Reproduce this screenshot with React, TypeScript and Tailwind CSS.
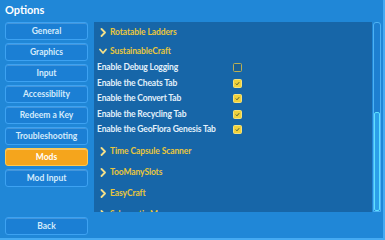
import React from "react";

const font = { fontFamily: "Lato, 'Open Sans', sans-serif" };

function NavButton({ label, active }: { label: string; active?: boolean }) {
  return (
    <div
      className={
        active
          ? "h-[18px] rounded-[3px] border border-[#ffc94d] bg-[#f5a51c] flex items-center justify-center text-[8.5px] font-bold text-white shadow-[inset_0_1px_0_rgba(255,255,255,0.35)]"
          : "h-[18px] rounded-[3px] border border-[#3da2f2] bg-[#1b7fd4] flex items-center justify-center text-[8.5px] font-bold text-[#d4ebfb] shadow-[inset_0_1px_0_rgba(255,255,255,0.18)]"
      }
    >
      {label}
    </div>
  );
}

function Chevron({ down }: { down?: boolean }) {
  return (
    <svg width="8" height="9" viewBox="0 0 8 9" className="shrink-0">
      {down ? (
        <path d="M1 2.5 L4 6 L7 2.5" fill="none" stroke="#f3e08a" strokeWidth="1.8" strokeLinecap="round" strokeLinejoin="round" />
      ) : (
        <path d="M2.5 1 L6 4.5 L2.5 8" fill="none" stroke="#f3e08a" strokeWidth="1.8" strokeLinecap="round" strokeLinejoin="round" />
      )}
    </svg>
  );
}

function Header({ label, down, h }: { label: string; down?: boolean; h: string }) {
  return (
    <div className={`${h} flex items-center pl-[5px] gap-[3px] shrink-0`}>
      <Chevron down={down} />
      <span className="text-[8.5px] font-bold text-[#e9c63c] tracking-[-0.1px]">{label}</span>
    </div>
  );
}

function Setting({ label, checked }: { label: string; checked?: boolean }) {
  return (
    <div className="h-[15.5px] flex items-center pl-[3px] shrink-0">
      <span className="w-[136px] text-[8.5px] font-bold text-[#e3f1fb] tracking-[-0.15px] whitespace-nowrap">{label}</span>
      <div
        className={
          checked
            ? "w-[9px] h-[9px] rounded-[1.5px] bg-[#f1d23b] border border-[#f7e27a] flex items-center justify-center"
            : "w-[9px] h-[9px] rounded-[1.5px] bg-[#1a5f95] border border-[#b9b056]"
        }
      >
        {checked && (
          <svg width="5" height="5" viewBox="0 0 5 5">
            <path d="M0.8 2.6 L2 3.8 L4.2 1.2" fill="none" stroke="#4a5a3a" strokeWidth="1" />
          </svg>
        )}
      </div>
    </div>
  );
}

export default function App() {
  return (
    <div
      className="w-[385px] h-[240px] bg-[#2087d7] flex flex-col overflow-hidden border-r-[2px] border-b-[2px] border-[#45aaf2]"
      style={font}
    >
      <div className="h-[22px] shrink-0 flex items-center pl-[5px] pb-[1px]">
        <span className="text-[11px] font-bold text-white">Options</span>
      </div>
      <div className="flex flex-1">
        <div className="w-[83px] ml-[5px] flex flex-col gap-[3px] pb-[3px]">
          <NavButton label="General" />
          <NavButton label="Graphics" />
          <NavButton label="Input" />
          <NavButton label="Accessibility" />
          <NavButton label="Redeem a Key" />
          <NavButton label="Troubleshooting" />
          <NavButton label="Mods" active />
          <NavButton label="Mod Input" />
          <div className="mt-auto">
            <NavButton label="Back" />
          </div>
        </div>
        <div className="ml-[6px] self-start flex">
          <div className="w-[278px] h-[190px] bg-[#1766a8] overflow-hidden flex flex-col">
            <Header label="Rotatable Ladders" h="h-[20px]" />
            <Header label="SustainableCraft" down h="h-[18px]" />
            <Setting label="Enable Debug Logging" />
            <Setting label="Enable the Cheats Tab" checked />
            <Setting label="Enable the Convert Tab" checked />
            <Setting label="Enable the Recycling Tab" checked />
            <Setting label="Enable the GeoFlora Genesis Tab" checked />
            <div className="h-[3px] shrink-0" />
            <Header label="Time Capsule Scanner" h="h-[21px]" />
            <Header label="TooManySlots" h="h-[21px]" />
            <Header label="EasyCraft" h="h-[21px]" />
            <Header label="Schematic Manager" h="h-[21px]" />
          </div>
          <div className="w-[8px] h-[190px] ml-[1px] rounded-t-[3px] border border-[#4db2f4] bg-[#1d7fd0] flex flex-col justify-end">
            <div className="h-[99px] rounded-[2px] border border-[#5fe0ff] bg-[#2b9fe8]" />
          </div>
        </div>
      </div>
    </div>
  );
}
